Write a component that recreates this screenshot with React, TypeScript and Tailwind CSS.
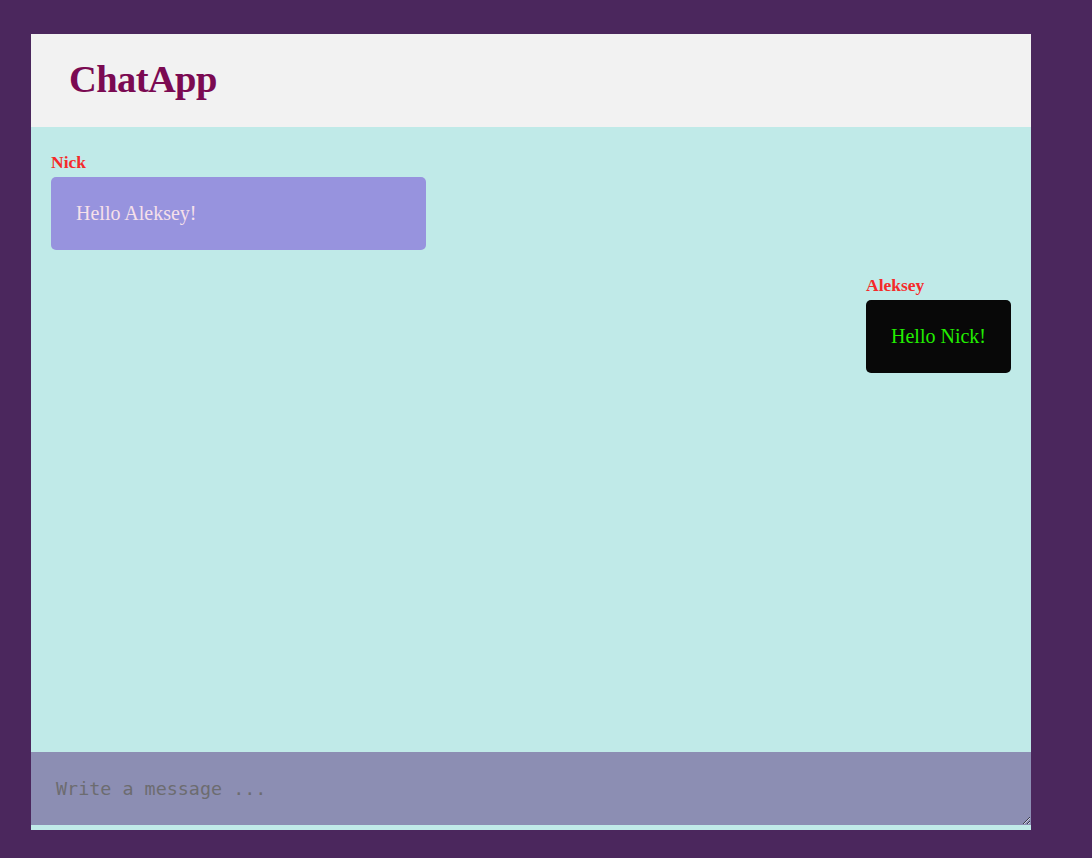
export default function App() {
  const messages = [
    { from: "Nick", text: "Hello Aleksey!", mine: false },
    { from: "Aleksey", text: "Hello Nick!", mine: true },
  ]

  return (
    <div className="min-h-screen bg-[#4b275d] pt-[34px] pb-[28px] font-['Liberation_Serif',serif]">
      <div className="ml-[31px] w-[1000px]">
        {/* header */}
        <div className="h-[93px] bg-[#f2f2f2] pl-[38px] pt-[22px]">
          <h1 className="text-[38.5px] leading-[46px] tracking-[-0.6px] font-bold text-[#7b0a52]">ChatApp</h1>
        </div>

        {/* messages */}
        <div className="h-[625px] bg-[#c0eae8] px-[20px] pt-[25px] flex flex-col gap-[25px]">
          {messages.map((m) => (
            <div key={m.from} className={`flex flex-col ${m.mine ? "items-end" : "items-start"}`}>
              <div className="w-fit">
                <div className="text-[17.5px] leading-[20px] font-bold text-[#f52a2a]">{m.from}</div>
                <div
                  className={`mt-[5px] rounded-[5px] px-[25px] py-[25px] text-[20px] leading-[23px] ${
                    m.mine ? "bg-[#080808] text-[#22ee00]" : "w-[375px] bg-[#9793de] text-[#f6e0ea]"
                  }`}
                >
                  {m.text}
                </div>
              </div>
            </div>
          ))}
        </div>

        {/* input */}
        <div className="bg-[#c0eae8] pb-[5px]">
          <textarea
            autoFocus
            placeholder="Write a message ..."
            className="block h-[73px] w-full bg-[#8c8eb3] px-[25px] py-[25px] font-['DejaVu_Sans_Mono',monospace] text-[18.4px] leading-[23px] text-black caret-black placeholder:text-[#6c6c70] outline-none"
          />
        </div>
      </div>
    </div>
  )
}
